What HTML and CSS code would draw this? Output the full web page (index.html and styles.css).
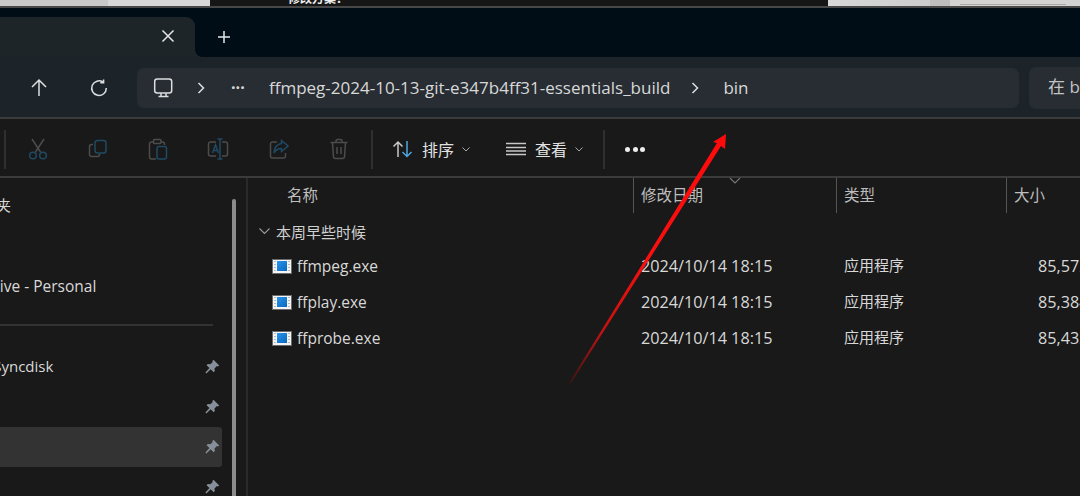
FILE: index.html
```html
<!DOCTYPE html>
<html lang="zh-CN">
<head>
  <meta charset="UTF-8" />
  <title>bin - 文件资源管理器</title>
  <link rel="stylesheet" href="styles.css">
</head>
<body>

<div class="top-strip">
  <div class="strip-a"></div>
  <div class="strip-b"></div>
  <div class="strip-dark"><span>修改方案：</span></div>
  <div class="strip-c"></div>
  <div class="strip-d"></div>
  <div class="strip-e"><i></i></div>
</div>

<div class="tabbar">
  <div class="tab">
    <svg class="tab-close" width="14" height="14" viewBox="0 0 14 14"><path d="M1.5 1.5l11 11M12.5 1.5l-11 11" /></svg>
  </div>
  <svg class="tab-add" width="14" height="14" viewBox="0 0 14 14"><path d="M7 1v12M1 7h12" /></svg>
</div>

<div class="navbar">
  <button class="nav-btn">
    <svg width="18" height="20" viewBox="0 0 18 20"><path d="M9 2v16M2 9l7-7 7 7" /></svg>
  </button>
  <button class="nav-btn">
    <svg width="18" height="18" viewBox="0 0 18 18"><path d="M13.2 3.2A7.3 7.3 0 1 0 16.3 9" /><path d="M13.6 .5v3.2h-3.3" /></svg>
  </button>
  <div class="address">
    <svg class="monitor" width="20" height="20" viewBox="0 0 20 20"><rect x="1.7" y="1" width="17" height="14" rx="2.5" /><path d="M8 15v3M13 15v3M5.500 18.500h10" /></svg>
    <svg class="crumb-sep" width="8" height="12" viewBox="0 0 8 12"><path d="M1.500 1l5 5-5 5" /></svg>
    <span class="more">···</span>
    <span class="crumb">ffmpeg-2024-10-13-git-e347b4ff31-essentials_build</span>
    <svg class="crumb-sep" width="8" height="12" viewBox="0 0 8 12"><path d="M1.500 1l5 5-5 5" /></svg>
    <span class="crumb">bin</span>
  </div>
  <div class="search">在 bin 中搜索</div>
</div>

<div class="toolbar">
  <span class="tool-sep first"></span>
  <button class="tool">
    <svg width="20" height="22" viewBox="0 0 20 22"><path class="dim" d="M4 1l8.500 13M16 1L7.500 14" /><circle class="blue" cx="5" cy="17.500" r="3.300" /><circle class="blue" cx="15" cy="17.500" r="3.300" /></svg>
  </button>
  <button class="tool">
    <svg width="20" height="20" viewBox="0 0 20 20"><path class="dim" d="M5 5.500H3.500A2 2 0 0 0 1.500 7.500v8a2 2 0 0 0 2 2h6a2 2 0 0 0 2-2V15" /><rect class="blue" x="7" y="1.500" width="11" height="12.500" rx="2.500" /></svg>
  </button>
  <button class="tool">
    <svg width="20" height="22" viewBox="0 0 20 22"><path class="dim" d="M5.500 4H3.500a2 2 0 0 0-2 2v13a2 2 0 0 0 2 2H8M13 4h1.500a2 2 0 0 1 2 2v1" /><rect class="dim" x="5.500" y="1.500" width="7.500" height="4" rx="1" /><rect class="blue" x="9" y="8.500" width="9.500" height="12.500" rx="2" /></svg>
  </button>
  <button class="tool">
    <svg width="22" height="22" viewBox="0 0 22 22"><path class="dim" d="M9 4H3.500a2 2 0 0 0-2 2v10a2 2 0 0 0 2 2H9M15 4h3.500a2 2 0 0 1 2 2v10a2 2 0 0 1-2 2H15" /><path class="blue" d="M13 1v20M10.500 1h5M10.500 21h5M5.500 15l3-8 3 8M6.500 12.500h4" /></svg>
  </button>
  <button class="tool nudge">
    <svg width="20" height="20" viewBox="0 0 20 20"><path class="dim" d="M8 3H3.500a2 2 0 0 0-2 2v12a2 2 0 0 0 2 2h11a2 2 0 0 0 2-2v-3" /><path class="blue" d="M12.500 1.500L19 7l-6.500 5.500V9.500C9 9.500 7 10.500 5 14c.5-5 3-9 7.500-9.500z" /></svg>
  </button>
  <button class="tool nudge">
    <svg width="20" height="22" viewBox="0 0 20 22"><path class="dim" d="M1.500 4.500h17M7 4.500V3a1.500 1.500 0 0 1 1.500-1.500h3A1.500 1.500 0 0 1 13 3v1.500M3.500 4.500l1 14.500a2 2 0 0 0 2 1.500h7a2 2 0 0 0 2-1.500l1-14.500M8 9v7M12 9v7" /></svg>
  </button>
  <span class="tool-sep after-tools"></span>
  <div class="menu-btn sort">
    <svg width="22" height="18" viewBox="0 0 22 18"><path class="light" d="M6 17V2M1.500 6.500L6 2l4.500 4.500" /><path class="sky" d="M15 1v15.500M10.500 12l4.500 4.500 4.500-4.500" /></svg>
    <span>排序</span>
    <svg class="caret" width="8" height="5" viewBox="0 0 8 5"><path d="M.5 .5L4 4l3.500-3.500" /></svg>
  </div>
  <div class="menu-btn view">
    <svg width="20" height="14" viewBox="0 0 20 14"><path class="light" d="M0 1.500h20M0 5.500h20M0 9h20M0 12.500h20" /></svg>
    <span>查看</span>
    <svg class="caret" width="8" height="5" viewBox="0 0 8 5"><path d="M.5 .5L4 4l3.500-3.500" /></svg>
  </div>
  <span class="tool-sep"></span>
  <div class="tool-more"><i></i><i></i><i></i></div>
</div>

<div class="main">
  <aside class="sidebar">
    <div class="nav-list">
      <div class="nav-row quick">收藏夹</div>
      <div class="nav-row cloud">OneDrive - Personal</div>
      <hr class="nav-line" />
      <div class="nav-row pinned disk">
        <span>BaiduSyncdisk</span>
        <svg class="pin" width="16" height="16" viewBox="0 0 16 16"><path d="M9.500 .8l5.700 5.700-1.300 1-1-.4-2.400 2.400.3 2.500-1.200 1.200-2.900-2.900-4.300 4.100-1-1 4.100-4.300L2.600 6.200l1.200-1.200 2.500.3L8.700 2.900l-.3-1z" /></svg>
      </div>
      <div class="nav-row pinned">
        <svg class="pin" width="16" height="16" viewBox="0 0 16 16"><path d="M9.500 .8l5.700 5.700-1.300 1-1-.4-2.400 2.400.3 2.500-1.200 1.200-2.900-2.900-4.300 4.100-1-1 4.100-4.300L2.600 6.200l1.200-1.200 2.500.3L8.700 2.900l-.3-1z" /></svg>
      </div>
      <div class="nav-row pinned selected">
        <svg class="pin" width="16" height="16" viewBox="0 0 16 16"><path d="M9.500 .8l5.700 5.700-1.300 1-1-.4-2.400 2.400.3 2.500-1.200 1.200-2.900-2.900-4.300 4.100-1-1 4.100-4.300L2.600 6.200l1.200-1.200 2.500.3L8.700 2.900l-.3-1z" /></svg>
      </div>
      <div class="nav-row pinned">
        <svg class="pin" width="16" height="16" viewBox="0 0 16 16"><path d="M9.500 .8l5.700 5.700-1.300 1-1-.4-2.400 2.400.3 2.500-1.200 1.200-2.900-2.900-4.300 4.100-1-1 4.100-4.300L2.600 6.200l1.200-1.200 2.500.3L8.700 2.900l-.3-1z" /></svg>
      </div>
    </div>
    <div class="scrollbar"></div>
  </aside>

  <section class="files">
    <div class="list-head">
      <div class="col-name">名称</div>
      <div class="col-date">修改日期
        <svg class="sort-mark" width="12" height="7" viewBox="0 0 12 7"><path d="M1 1l5 5 5-5" /></svg>
      </div>
      <div class="col-type">类型</div>
      <div class="col-size">大小</div>
    </div>

    <div class="group">
      <svg width="11" height="7" viewBox="0 0 11 7"><path d="M.5 .5l5 5 5-5" /></svg>
      <span>本周早些时候</span>
    </div>

    <div class="file-row">
      <div class="file-name"><span class="exe"><i></i></span>ffmpeg.exe</div>
      <div class="file-date">2024/10/14 18:15</div>
      <div class="file-type">应用程序</div>
      <div class="file-size">85,572 KB</div>
    </div>
    <div class="file-row">
      <div class="file-name"><span class="exe"><i></i></span>ffplay.exe</div>
      <div class="file-date">2024/10/14 18:15</div>
      <div class="file-type">应用程序</div>
      <div class="file-size">85,384 KB</div>
    </div>
    <div class="file-row">
      <div class="file-name"><span class="exe"><i></i></span>ffprobe.exe</div>
      <div class="file-date">2024/10/14 18:15</div>
      <div class="file-type">应用程序</div>
      <div class="file-size">85,432 KB</div>
    </div>
  </section>
</div>

<!-- red annotation arrow drawn over the screenshot -->
<svg class="annotation" width="1080" height="496" viewBox="0 0 1080 496">
  <defs>
    <linearGradient id="fade" x1="569" y1="383" x2="726" y2="134" gradientUnits="userSpaceOnUse">
      <stop offset="0" stop-color="#3a1414" />
      <stop offset="0.2" stop-color="#c01212" />
      <stop offset="0.5" stop-color="#fb0f0f" />
      <stop offset="1" stop-color="#ff0a0a" />
    </linearGradient>
  </defs>
  <polygon fill="url(#fade)" points="569,383 717,143 713,142 726,134 725,149 721,146 571,383" />
</svg>

</body>
</html>
```

FILE: styles.css
```css
* {
  box-sizing: border-box;
}

html, body {
  height: 100%;
}

body {
  margin: 0;
  width: 1080px;
  height: 496px;
  overflow: hidden;
  position: relative;
  background: #191919;
  color: #d8d8d8;
  font-family: "Open Sans", "Noto Sans CJK SC", sans-serif;
  font-size: 15px;
}

svg {
  display: block;
  flex: none;
  fill: none;
  stroke-width: 1.5;
}

button {
  background: none;
  border: none;
  padding: 0;
}

/* picture cut off above the window */
.top-strip {
  display: flex;
  height: 8px;
  border-bottom: 2px solid #484848;
}

.strip-a {
  width: 108px;
  background: #c9c9c9;
}

.strip-b {
  width: 102px;
  background: #d7d7d7;
}

.strip-dark {
  width: 618px;
  background: #161616;
  padding-left: 78px;
  overflow: hidden;
}

.strip-dark span {
  display: block;
  margin-top: -8px;
  font-size: 12px;
  line-height: 14px;
  font-weight: 700;
  color: #eee;
}

.strip-c {
  width: 102px;
  background: linear-gradient(90deg, #d8d8d8, #cdcdcd);
}

.strip-d {
  width: 20px;
  background: #bdbdbd;
}

.strip-e {
  flex: 1;
  background: #d2d2d2;
  padding: 4px 14px 0 10px;
}

.strip-e i {
  display: block;
  height: 1px;
  background: #a8a8a8;
}

/* tabs */
.tabbar {
  display: flex;
  align-items: flex-end;
  height: 49px;
  background: #000c16;
  position: relative;
}

/* small inverted corner where the tab meets the nav row */
.tabbar::after {
  content: "";
  position: absolute;
  left: 195px;
  bottom: 0;
  width: 7px;
  height: 7px;
  background: radial-gradient(circle at 100% 0, transparent 6.500px, #1e2529 7px);
}

.tab {
  display: flex;
  align-items: center;
  justify-content: flex-end;
  width: 195px;
  height: 40px;
  padding: 0 20px 2px 0;
  background: #1e2529;
  border-top-right-radius: 9px;
}

.tab-close {
  stroke: #e4e6e8;
}

.tab-add {
  stroke: #e4e6e8;
  margin: 0 0 13px 22px;
}

/* nav row with the address box */
.navbar {
  display: flex;
  align-items: center;
  height: 60px;
  padding: 1px 0 0 9px;
  background: #1c242a;
}

.nav-btn {
  display: flex;
  align-items: center;
  justify-content: center;
  width: 60px;
  height: 40px;
  stroke: #dcdee0;
}

.address {
  display: flex;
  align-items: center;
  flex: none;
  width: 882px;
  height: 40px;
  margin-left: 8px;
  padding-left: 16px;
  background: #272d33;
  border-radius: 7px;
  stroke: #dcdee0;
  font-size: 17px;
  white-space: nowrap;
}

.crumb-sep {
  margin: 0 26px 0 24px;
}

.crumb + .crumb-sep {
  margin: 0 24px 0 21px;
}

.more {
  width: 38px;
  font-size: 16px;
  font-weight: 700;
  line-height: 1;
  margin-top: -2px;
}

.search {
  flex: none;
  width: 51px;
  height: 42px;
  line-height: 40px;
  margin-left: 10px;
  padding-left: 19px;
  background: #272d33;
  border-radius: 7px 0 0 7px;
  font-size: 17px;
  white-space: nowrap;
  overflow: hidden;
  color: #c4c4c4;
}

/* command bar */
.toolbar {
  display: flex;
  align-items: center;
  height: 61px;
  padding: 3px 0 0 4px;
  border-top: 2px solid #3b3b3b;
  border-bottom: 2px solid #3b3b3b;
  background: #191919;
}

.tool {
  display: flex;
  align-items: center;
  justify-content: center;
  width: 60px;
  height: 40px;
}

.tool.nudge {
  padding-left: 2px;
}

.tool .dim {
  stroke: #4c4c4c;
}

.tool .blue {
  stroke: #1f4a63;
}

.tool-sep {
  flex: none;
  width: 2px;
  height: 39px;
  background: #2f2f2f;
}

.tool-sep.first {
  margin-right: 2px;
}

.tool-sep.after-tools {
  margin-left: 3px;
}

.menu-btn {
  display: flex;
  align-items: center;
  gap: 8px;
  font-size: 16px;
  color: #e2e2e2;
}

.menu-btn .light {
  stroke: #c8c8c8;
}

.menu-btn .sky {
  stroke: #4fa6dc;
}

.caret {
  stroke: #a8a8a8;
  stroke-width: 1;
}

.sort {
  margin-left: 19px;
}

.view {
  margin-left: 36px;
}

.view span {
  margin-left: 1px;
}

.view + .tool-sep {
  margin-left: 20px;
}

.tool-more {
  display: flex;
  gap: 2.500px;
  margin-left: 20px;
}

.tool-more i {
  width: 5px;
  height: 5px;
  border-radius: 50%;
  background: #eee;
}

/* sidebar and file list */
.main {
  display: flex;
  height: 318px;
}

.sidebar {
  position: relative;
  flex: none;
  width: 248px;
  border-right: 2px solid #2a2a2a;
  overflow: hidden;
}

.nav-list {
  width: 222px;
  padding-top: 6px;
}

.nav-row {
  display: flex;
  align-items: center;
  justify-content: space-between;
  height: 40px;
  white-space: nowrap;
  font-size: 15px;
}

.quick {
  margin-left: -34px;
}

.cloud {
  margin: 42px 0 0 -48px;
  font-size: 15.500px;
}

.nav-line {
  width: 213px;
  height: 2px;
  margin: 18px 0 21px;
  border: none;
  background: #323232;
}

.pinned {
  justify-content: flex-end;
  padding-right: 2px;
}

.disk {
  justify-content: space-between;
  margin-left: -47px;
}

.disk span {
  margin-top: -2px;
}

.selected {
  background: #333;
  border-radius: 0 3px 3px 0;
}

.pin {
  fill: #87909a;
  stroke: none;
}

.scrollbar {
  position: absolute;
  left: 232px;
  top: 21px;
  bottom: 0;
  width: 4px;
  background: #8c8c8c;
  border-radius: 2px 2px 0 0;
}

.files {
  flex: 1;
  min-width: 0;
  overflow: hidden;
}

.list-head,
.file-row {
  display: grid;
  grid-template-columns: 385px 203px 170px 1fr;
  white-space: nowrap;
}

.list-head {
  height: 33px;
  line-height: 35px;
  font-size: 15.500px;
  color: #bdbdbd;
}

.list-head > div {
  position: relative;
  padding-left: 7px;
  border-left: 1px solid #555;
}

.list-head .col-name {
  padding-left: 39px;
  border-left: none;
}

.sort-mark {
  position: absolute;
  left: 95px;
  top: -1px;
  stroke: #777;
  stroke-width: 1.2;
}

.group {
  display: flex;
  align-items: center;
  gap: 6px;
  height: 37px;
  padding: 3px 0 0 11px;
  font-size: 15px;
  color: #d0d0d0;
}

.group svg {
  stroke: #9a9a9a;
  stroke-width: 1.1;
}

.file-row {
  height: 36px;
  line-height: 36px;
  font-size: 16.200px;
  color: #d8d8d8;
}

.file-name {
  display: flex;
  align-items: center;
  gap: 5px;
  padding-left: 24px;
  font-size: 15.500px;
}

.file-date,
.file-type {
  padding-left: 8px;
}

.file-type {
  font-size: 15px;
  line-height: 34px;
}

.file-size {
  padding-left: 32px;
}

/* app icon: white window with side ticks and a blue square */
.exe {
  display: flex;
  align-items: center;
  justify-content: center;
  width: 20px;
  height: 15px;
  background:
    repeating-linear-gradient(180deg, #b9b9b9 0 1px, transparent 1px 3px) 1px 1px / 2px 11px no-repeat,
    repeating-linear-gradient(180deg, #b9b9b9 0 1px, transparent 1px 3px) 15px 1px / 2px 11px no-repeat,
    #f4f4f4;
  border: 1px solid #6a6a6a;
}

.exe i {
  width: 10px;
  height: 10px;
  background: linear-gradient(135deg, #2b95e8, #0868c4);
}

.annotation {
  position: absolute;
  left: 0;
  top: 0;
  pointer-events: none;
}
```
